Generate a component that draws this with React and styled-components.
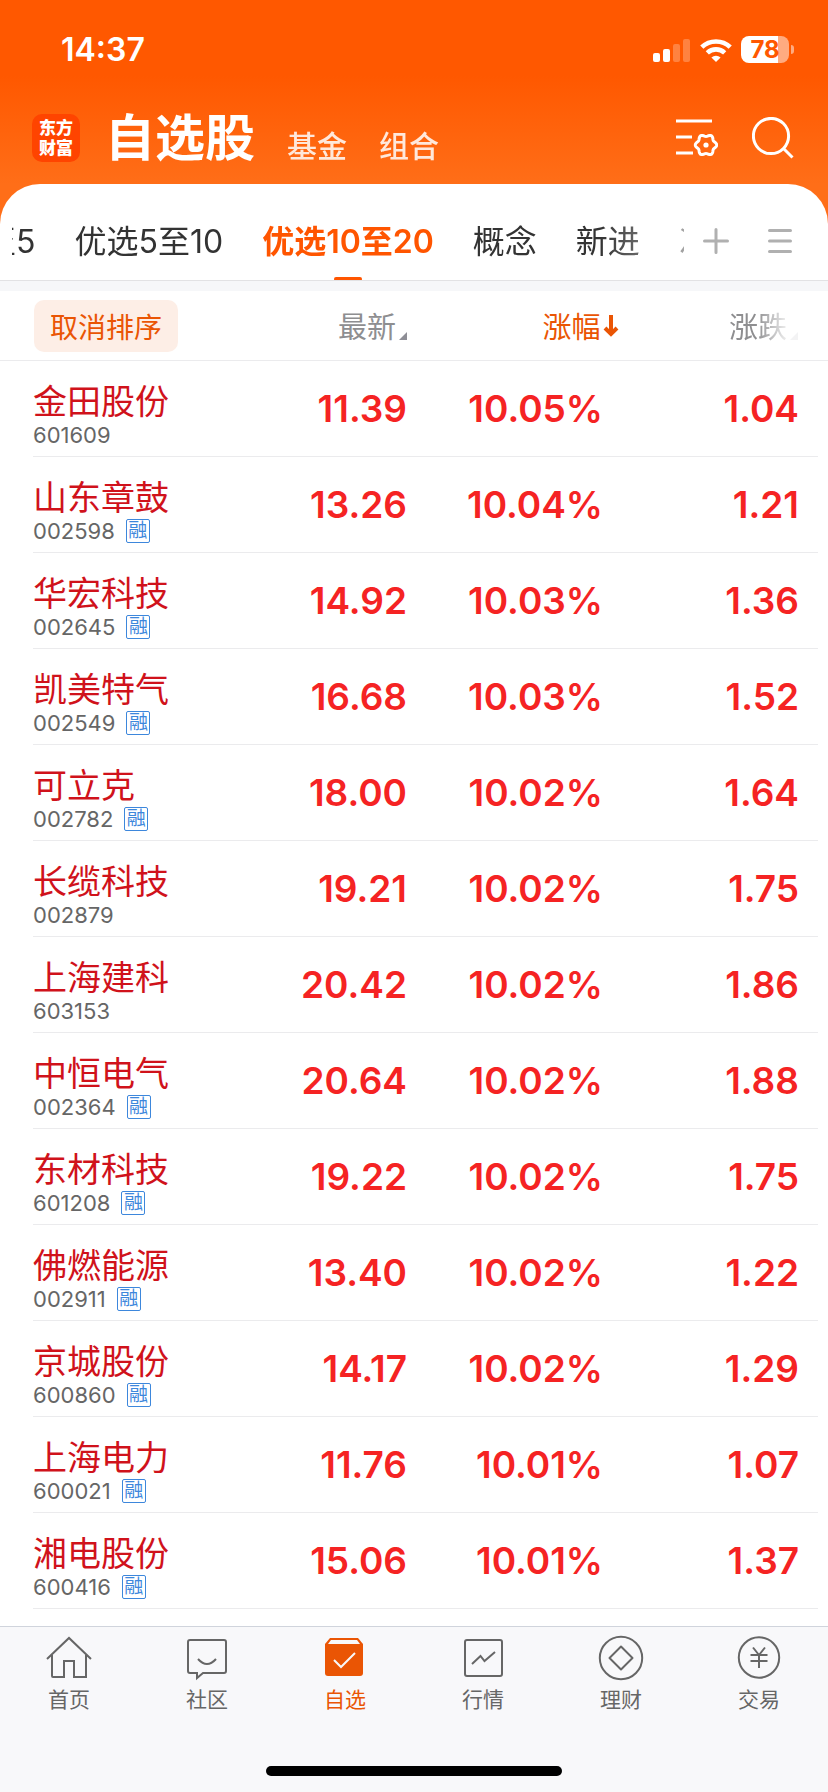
import React, { useState } from "react";
import styled, { createGlobalStyle, css } from "styled-components";

const tabs = ["优选至5", "优选5至10", "优选10至20", "概念", "新进", "次新"];

const stocks = [
  { name: "金田股份", code: "601609", margin: false, price: "11.39", pct: "10.05%", diff: "1.04" },
  { name: "山东章鼓", code: "002598", margin: true, price: "13.26", pct: "10.04%", diff: "1.21" },
  { name: "华宏科技", code: "002645", margin: true, price: "14.92", pct: "10.03%", diff: "1.36" },
  { name: "凯美特气", code: "002549", margin: true, price: "16.68", pct: "10.03%", diff: "1.52" },
  { name: "可立克", code: "002782", margin: true, price: "18.00", pct: "10.02%", diff: "1.64" },
  { name: "长缆科技", code: "002879", margin: false, price: "19.21", pct: "10.02%", diff: "1.75" },
  { name: "上海建科", code: "603153", margin: false, price: "20.42", pct: "10.02%", diff: "1.86" },
  { name: "中恒电气", code: "002364", margin: true, price: "20.64", pct: "10.02%", diff: "1.88" },
  { name: "东材科技", code: "601208", margin: true, price: "19.22", pct: "10.02%", diff: "1.75" },
  { name: "佛燃能源", code: "002911", margin: true, price: "13.40", pct: "10.02%", diff: "1.22" },
  { name: "京城股份", code: "600860", margin: true, price: "14.17", pct: "10.02%", diff: "1.29" },
  { name: "上海电力", code: "600021", margin: true, price: "11.76", pct: "10.01%", diff: "1.07" },
  { name: "湘电股份", code: "600416", margin: true, price: "15.06", pct: "10.01%", diff: "1.37" },
];

// six-lobed outline of the gear
const gearPoints = Array.from({ length: 72 }, (_, i) => {
  const a = (i * Math.PI) / 36;
  const r = 9.6 + 1.1 * Math.cos(6 * a);
  return `${(30 + r * Math.cos(a)).toFixed(2)},${(28 + r * Math.sin(a)).toFixed(2)}`;
}).join(" ");

const SignalIcon = () => (
  <svg width="38" height="24" viewBox="0 0 38 24" fill="#fff">
    <rect x="0" y="15" width="7" height="9" rx="2" />
    <rect x="10" y="11" width="7" height="13" rx="2" />
    <rect x="20" y="6" width="7" height="18" rx="2" opacity=".25" />
    <rect x="30" y="1" width="7" height="23" rx="2" opacity=".25" />
  </svg>
);

const WifiIcon = () => (
  <svg width="32" height="24" viewBox="0 0 32 24">
    <g fill="none" stroke="#fff" strokeWidth="4.6">
      <path d="M1.8 9.2A20.4 20.4 0 0 1 30.2 9.2" />
      <path d="M7.3 14.9A12.6 12.6 0 0 1 24.7 14.9" />
    </g>
    <path d="M11.4 19.4A7 7 0 0 1 20.6 19.4L16 24Z" fill="#fff" />
  </svg>
);

const ListSettingIcon = () => (
  <svg width="42" height="42" viewBox="0 0 42 42" fill="none" stroke="#fff" strokeWidth="3">
    <path d="M0 4H36M0 20H16M0 36H17" />
    <polygon points={gearPoints} strokeLinejoin="round" />
    <circle cx="30" cy="28" r="2.6" fill="#fff" stroke="none" />
  </svg>
);

const SearchIcon = () => (
  <svg width="42" height="42" viewBox="0 0 42 42" fill="none" stroke="#fff" strokeWidth="3">
    <circle cx="19" cy="19" r="17.6" />
    <path d="M31.5 31.5L40.5 40.5" />
  </svg>
);

const PlusIcon = () => (
  <svg width="26" height="26" viewBox="0 0 26 26" stroke="#b0b0b0" strokeWidth="3" strokeLinecap="round">
    <path d="M13 1.5V24.5M1.5 13H24.5" />
  </svg>
);

const MenuIcon = () => (
  <svg width="24" height="26" viewBox="0 0 24 26" stroke="#b0b0b0" strokeWidth="3" strokeLinecap="round">
    <path d="M1.5 2.5H22.5M1.5 13H22.5M1.5 23.5H22.5" />
  </svg>
);

const HomeIcon = () => (
  <>
    <path d="M2 25L24 4L46 25" />
    <path d="M7 21V42Q7 43 8 43H19V27H29V43H41V21" />
  </>
);

const CommunityIcon = () => (
  <>
    <path d="M7 6H41Q43 6 43 8V37Q43 39 41 39H20L14 44V39H7Q5 39 5 37V8Q5 6 7 6Z" />
    <path d="M15 25Q24 35 33 25" />
  </>
);

const WatchIcon = () => (
  <>
    <path d="M9 4H37L42 10V39Q42 42 39 42H7Q4 42 4 39V10Z" fill="#ea5504" stroke="none" />
    <path d="M10 6H36L39 10H7Z" fill="#f8f8fa" stroke="none" />
    <path d="M13 26L20 33L34 19" stroke="#f8f8fa" />
  </>
);

const MarketIcon = () => (
  <>
    <rect x="6" y="6" width="37" height="36" rx="2" />
    <path d="M13 30L21.5 22L25.5 27L36 18" />
  </>
);

const WealthIcon = () => (
  <>
    <circle cx="24" cy="24" r="21.2" />
    <path d="M24 12.5L35.5 24L24 35.5L12.5 24Z" strokeLinejoin="round" />
  </>
);

const TradeIcon = () => (
  <>
    <circle cx="24" cy="23.5" r="20.2" />
    <path d="M18 13.5L24 21L30 13.5M15.5 21H32.5M15.5 27H32.5M24 21V34" />
  </>
);

const navItems = [
  { label: "首页", Icon: HomeIcon },
  { label: "社区", Icon: CommunityIcon },
  { label: "自选", Icon: WatchIcon },
  { label: "行情", Icon: MarketIcon },
  { label: "理财", Icon: WealthIcon },
  { label: "交易", Icon: TradeIcon },
];

function App() {
  const [activeTab, setActiveTab] = useState(2);
  const [activeNav, setActiveNav] = useState(2);

  return (
    <Page>
      <GlobalStyle />
      <StatusBar>
        <Clock>14:37</Clock>
        <StatusIcons>
          <SignalIcon />
          <WifiIcon />
          <Battery>
            <BatteryBody>78</BatteryBody>
            <BatteryCap />
          </Battery>
        </StatusIcons>
      </StatusBar>

      <Header>
        <Logo>
          <span>东方</span>
          <span>财富</span>
        </Logo>
        <Title>自选股</Title>
        <HeaderLink>基金</HeaderLink>
        <HeaderLink>组合</HeaderLink>
        <HeaderActions>
          <IconButton aria-label="列表设置">
            <ListSettingIcon />
          </IconButton>
          <IconButton aria-label="搜索">
            <SearchIcon />
          </IconButton>
        </HeaderActions>
      </Header>

      <Sheet>
        <GroupBar>
          <GroupScroll>
            <GroupList>
              {tabs.map((t, i) => (
                <GroupTab key={t} $active={activeTab === i} onClick={() => setActiveTab(i)}>
                  {t}
                </GroupTab>
              ))}
            </GroupList>
          </GroupScroll>
          <GroupActions>
            <IconButton aria-label="添加分组">
              <PlusIcon />
            </IconButton>
            <IconButton aria-label="分组管理">
              <MenuIcon />
            </IconButton>
          </GroupActions>
        </GroupBar>

        <Table>
          <Thead>
            <HeadRow>
              <HeadCell $left>
                <ResetButton>取消排序</ResetButton>
              </HeadCell>
              <HeadCell>
                <SortButton>
                  最新
                  <Corner />
                </SortButton>
              </HeadCell>
              <HeadCell>
                <SortButton $active>
                  涨幅
                  <SortArrow width="16" height="22" viewBox="0 0 16 22">
                    <path d="M8 0V19M2 13L8 19L14 13" />
                  </SortArrow>
                </SortButton>
              </HeadCell>
              <HeadCell>
                <SortButton $fade>
                  涨跌
                  <Corner />
                </SortButton>
              </HeadCell>
            </HeadRow>
          </Thead>
          <Tbody>
            {stocks.map((s) => (
              <Row key={s.code}>
                <NameCell>
                  <StockName>{s.name}</StockName>
                  <StockCode>
                    {s.code}
                    {s.margin && <Badge>融</Badge>}
                  </StockCode>
                </NameCell>
                <ValueCell>{s.price}</ValueCell>
                <ValueCell>{s.pct}</ValueCell>
                <ValueCell>{s.diff}</ValueCell>
              </Row>
            ))}
          </Tbody>
        </Table>
      </Sheet>

      <BottomBar>
        <BottomNav>
          {navItems.map(({ label, Icon }, i) => (
            <NavButton key={label} $active={activeNav === i} onClick={() => setActiveNav(i)}>
              <NavSvg viewBox="0 0 48 48">
                <Icon />
              </NavSvg>
              {label}
            </NavButton>
          ))}
        </BottomNav>
        <HomeIndicator />
      </BottomBar>
    </Page>
  );
}

export default App;

const GlobalStyle = createGlobalStyle`
  * {
    box-sizing: border-box;
  }
  body {
    margin: 0;
    font-family: Inter, "Noto Sans CJK SC", sans-serif;
  }
  button {
    margin: 0;
    padding: 0;
    border: 0;
    background: none;
    font: inherit;
    color: inherit;
    cursor: pointer;
  }
  svg {
    display: block;
    flex: none;
  }
`;

const Page = styled.div`
  display: flex;
  flex-direction: column;
  min-height: 100vh;
  background: linear-gradient(#ff5800 0, #ff5800 76px, #ff6e18 184px);
`;

const StatusBar = styled.div`
  display: flex;
  align-items: center;
  justify-content: space-between;
  height: 99px;
  padding: 0 34px 0 61px;
  color: #fff;
`;

const Clock = styled.div`
  font-size: 32px;
  font-weight: 600;
`;

const StatusIcons = styled.div`
  display: flex;
  align-items: center;
  gap: 9px;
`;

const Battery = styled.div`
  display: flex;
  align-items: center;
  gap: 2px;
`;

const BatteryBody = styled.div`
  width: 48px;
  height: 27px;
  border-radius: 8px;
  background: linear-gradient(90deg, #fff 77%, #ffab80 77%);
  color: #ff5800;
  font-size: 24px;
  font-weight: 700;
  line-height: 27px;
  text-align: center;
`;

const BatteryCap = styled.div`
  width: 3px;
  height: 9px;
  border-radius: 0 4px 4px 0;
  background: #ffab80;
`;

const Header = styled.header`
  display: flex;
  align-items: center;
  height: 85px;
  padding: 0 34px 8px 32px;
  color: #fff;
`;

const Logo = styled.div`
  display: flex;
  flex-direction: column;
  align-items: center;
  justify-content: center;
  width: 48px;
  height: 48px;
  border-radius: 10px;
  background: #ff4400;
  font-size: 17px;
  font-weight: 900;
  line-height: 20px;
`;

const Title = styled.h1`
  margin: 0 0 0 25px;
  font-size: 50px;
  font-weight: 700;
  line-height: 60px;
`;

const HeaderLink = styled.button`
  margin: 17px 0 0 32px;
  font-size: 30px;
  font-weight: 500;
  line-height: 40px;
  opacity: 0.85;
`;

const HeaderActions = styled.div`
  display: flex;
  align-items: center;
  gap: 34px;
  margin-left: auto;
`;

const IconButton = styled.button`
  display: flex;
`;

const Sheet = styled.main`
  flex: 1;
  padding-bottom: 17px;
  border-radius: 40px 40px 0 0;
  background: #fff;
`;

const GroupBar = styled.div`
  display: flex;
  height: 97px;
  padding: 0 36px 0 12px;
  border-bottom: 1px solid #e2e2e4;
`;

const GroupScroll = styled.nav`
  flex: 1;
  min-width: 0;
  overflow: hidden;
  mask-image: linear-gradient(90deg, #000 calc(100% - 84px), transparent 110%);
`;

const GroupList = styled.div`
  display: flex;
  gap: 39px;
  height: 97px;
  margin-left: -92px;
`;

const GroupTab = styled.button`
  position: relative;
  flex: none;
  padding-top: 18px;
  color: #333;
  font-size: 32px;
  line-height: 48px;
  white-space: nowrap;

  ${(p) =>
    p.$active &&
    css`
      color: #ff5500;
      font-weight: 600;

      &::after {
        content: "";
        position: absolute;
        left: 50%;
        bottom: 0;
        width: 28px;
        height: 4px;
        margin-left: -14px;
        border-radius: 2px;
        background: #ff5500;
      }
    `}
`;

const GroupActions = styled.div`
  display: flex;
  align-items: center;
  gap: 39px;
  padding: 17px 0 0 19px;
`;

const Table = styled.table`
  display: block;
  border-top: 10px solid #f6f7f9;
`;

const Thead = styled.thead`
  display: block;
`;

const Tbody = styled.tbody`
  display: block;
`;

const columns = css`
  display: grid;
  grid-template-columns: 178fr 196fr 196fr 196fr;
  align-items: center;
`;

const HeadRow = styled.tr`
  ${columns}
  height: 70px;
  padding: 0 30px 0 34px;
  border-bottom: 1px solid #ebebed;
`;

const HeadCell = styled.th`
  display: flex;
  justify-content: ${(p) => (p.$left ? "flex-start" : "flex-end")};
  padding: 0;
  font-weight: 400;
`;

const ResetButton = styled.button`
  height: 52px;
  padding: 0 16px;
  border-radius: 10px;
  background: #fdeee6;
  color: #ea5504;
  font-size: 28px;
  white-space: nowrap;
`;

const SortButton = styled.button`
  display: flex;
  align-items: center;
  padding-top: 4px;
  margin-right: ${(p) => (p.$active ? "-16px" : "0")};
  color: ${(p) => (p.$active ? "#ea5504" : "#8e8e90")};
  font-size: 29px;
  line-height: 40px;
  ${(p) => p.$fade && "mask-image: linear-gradient(90deg, #000 40%, rgba(0, 0, 0, 0.1) 86%);"}
`;

const Corner = styled.i`
  align-self: flex-end;
  margin: 0 0 8px 3px;
  border-left: 8px solid transparent;
  border-bottom: 8px solid #8e8e96;
`;

const SortArrow = styled.svg`
  margin-left: 2px;
  margin-bottom: 4px;
  fill: none;
  stroke: #ea5504;
  stroke-width: 4;
`;

const Row = styled.tr`
  ${columns}
  height: 96px;
  margin: 0 10px 0 33px;
  padding-right: 19px;
  border-bottom: 1px solid #ebebed;
`;

const NameCell = styled.td`
  padding: 14px 0 0;
  white-space: nowrap;
`;

const StockName = styled.div`
  color: #d0121b;
  font-size: 34px;
  line-height: 38px;
`;

const StockCode = styled.div`
  display: flex;
  align-items: center;
  gap: 11px;
  color: #666;
  font-size: 22px;
  line-height: 28px;
`;

const Badge = styled.span`
  width: 24px;
  height: 24px;
  border: 1px solid #3d87dc;
  border-radius: 2px;
  color: #3d87dc;
  font-size: 19px;
  line-height: 22px;
  text-align: center;
`;

const ValueCell = styled.td`
  padding: 0;
  color: #f52323;
  font-size: 37px;
  font-weight: 600;
  text-align: right;
`;

const BottomBar = styled.footer`
  height: 166px;
  border-top: 1px solid #d0d4dc;
  background: #f8f8fa;
`;

const BottomNav = styled.nav`
  display: grid;
  grid-template-columns: repeat(6, 1fr);
  height: 139px;
`;

const NavButton = styled.button`
  display: flex;
  flex-direction: column;
  align-items: center;
  gap: 2px;
  padding-top: 7px;
  color: ${(p) => (p.$active ? "#ea5504" : "#666")};
  font-size: 21px;
  line-height: 32px;
`;

const NavSvg = styled.svg`
  width: 48px;
  height: 48px;
  fill: none;
  stroke: #666;
  stroke-width: 2;
`;

const HomeIndicator = styled.div`
  width: 296px;
  height: 10px;
  margin: 0 auto;
  border-radius: 5px;
  background: #000;
`;
